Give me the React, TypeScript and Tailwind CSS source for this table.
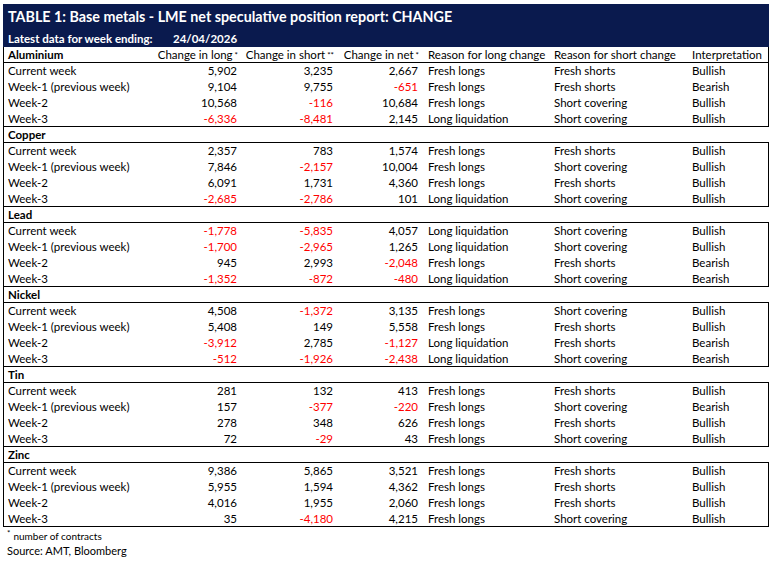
import React from "react";

type Row = {
  label: string;
  long: string;
  short: string;
  net: string;
  reasonLong: string;
  reasonShort: string;
  view: string;
};

type Section = { metal: string; rows: Row[] };

const labels = ["Current week", "Week-1 (previous week)", "Week-2", "Week-3"];

const mk = (metal: string, data: string[][]): Section => ({
  metal,
  rows: data.map((d, i) => ({
    label: labels[i],
    long: d[0],
    short: d[1],
    net: d[2],
    reasonLong: d[3],
    reasonShort: d[4],
    view: d[5],
  })),
});

const sections: Section[] = [
  mk("Aluminium", [
    ["5,902", "3,235", "2,667", "Fresh longs", "Fresh shorts", "Bullish"],
    ["9,104", "9,755", "-651", "Fresh longs", "Fresh shorts", "Bearish"],
    ["10,568", "-116", "10,684", "Fresh longs", "Short covering", "Bullish"],
    ["-6,336", "-8,481", "2,145", "Long liquidation", "Short covering", "Bullish"],
  ]),
  mk("Copper", [
    ["2,357", "783", "1,574", "Fresh longs", "Fresh shorts", "Bullish"],
    ["7,846", "-2,157", "10,004", "Fresh longs", "Short covering", "Bullish"],
    ["6,091", "1,731", "4,360", "Fresh longs", "Fresh shorts", "Bullish"],
    ["-2,685", "-2,786", "101", "Long liquidation", "Short covering", "Bullish"],
  ]),
  mk("Lead", [
    ["-1,778", "-5,835", "4,057", "Long liquidation", "Short covering", "Bullish"],
    ["-1,700", "-2,965", "1,265", "Long liquidation", "Short covering", "Bullish"],
    ["945", "2,993", "-2,048", "Fresh longs", "Fresh shorts", "Bearish"],
    ["-1,352", "-872", "-480", "Long liquidation", "Short covering", "Bearish"],
  ]),
  mk("Nickel", [
    ["4,508", "-1,372", "3,135", "Fresh longs", "Short covering", "Bullish"],
    ["5,408", "149", "5,558", "Fresh longs", "Fresh shorts", "Bullish"],
    ["-3,912", "2,785", "-1,127", "Long liquidation", "Fresh shorts", "Bearish"],
    ["-512", "-1,926", "-2,438", "Long liquidation", "Short covering", "Bearish"],
  ]),
  mk("Tin", [
    ["281", "132", "413", "Fresh longs", "Fresh shorts", "Bullish"],
    ["157", "-377", "-220", "Fresh longs", "Short covering", "Bearish"],
    ["278", "348", "626", "Fresh longs", "Fresh shorts", "Bullish"],
    ["72", "-29", "43", "Fresh longs", "Short covering", "Bullish"],
  ]),
  mk("Zinc", [
    ["9,386", "5,865", "3,521", "Fresh longs", "Fresh shorts", "Bullish"],
    ["5,955", "1,594", "4,362", "Fresh longs", "Fresh shorts", "Bullish"],
    ["4,016", "1,955", "2,060", "Fresh longs", "Fresh shorts", "Bullish"],
    ["35", "-4,180", "4,215", "Fresh longs", "Short covering", "Bullish"],
  ]),
];

const cols = "grid grid-cols-[152px_85px_96px_85px_126px_139px_83px]";

const Num = ({ v }: { v: string }) => (
  <div className={`text-right pr-[4px] ${v.startsWith("-") ? "text-[#ff0000]" : ""}`}>{v}</div>
);

const Star = ({ n }: { n: number }) => (
  <sup className="text-[8px] relative -top-[1px] ml-[2px]">{"*".repeat(n)}</sup>
);

const App = () => {
  return (
    <div
      className="w-[771px] h-[561px] bg-white text-black pl-[3px] pt-[4px] text-[11.5px] leading-none"
      style={{ fontFamily: "Lato, 'Noto Sans', sans-serif" }}
    >
      <div className="w-[766px]">
        {/* title block */}
        <div className="bg-[#0a1a4e] text-white font-bold">
          <div className="h-[27px] flex items-center pl-[5px] text-[14.3px]">
            TABLE 1: Base metals - LME net speculative position report: CHANGE
          </div>
          <div className="h-[16px] flex items-center pl-[5px] text-[11.5px]">
            <span className="w-[165px] shrink-0">Latest data for week ending:</span>
            <span>24/04/2026</span>
          </div>
        </div>

        {sections.map((s, si) => (
          <div key={s.metal}>
            {/* metal header row */}
            <div
              className={`${cols} h-4 items-center border-l border-b border-black ${
                si === 0 ? "border-r" : ""
              }`}
            >
              <div className="pl-[4px] font-bold">{s.metal}</div>
              {si === 0 && (
                <>
                  <div className="text-right pr-[3px]">
                    Change in long<Star n={1} />
                  </div>
                  <div className="text-right pr-[3px]">
                    Change in short<Star n={2} />
                  </div>
                  <div className="text-right pr-[3px]">
                    Change in net<Star n={1} />
                  </div>
                  <div className="pl-[6px]">Reason for long change</div>
                  <div className="pl-[6px]">Reason for short change</div>
                  <div className="pl-[5px]">Interpretation</div>
                </>
              )}
            </div>
            {/* data rows */}
            <div className="border-x border-b border-black">
              {s.rows.map((r, ri) => (
                <div
                  key={r.label}
                  className={`${cols} items-center ${ri === 3 ? "h-[15px]" : "h-4"}`}
                >
                  <div className="pl-[4px]">{r.label}</div>
                  <Num v={r.long} />
                  <Num v={r.short} />
                  <Num v={r.net} />
                  <div className="pl-[6px]">{r.reasonLong}</div>
                  <div className="pl-[6px]">{r.reasonShort}</div>
                  <div className="pl-[5px]">{r.view}</div>
                </div>
              ))}
            </div>
          </div>
        ))}

        {/* footnotes */}
        <div className="pl-[4px] pt-[3px] text-[10px] h-[14px] flex items-center">
          <span className="text-[8px] relative -top-[3px] mr-[3px]">*</span>
          number of contracts
        </div>
        <div className="pl-[4px] pt-[2px] text-[11px] h-[16px] flex items-center">
          Source: AMT, Bloomberg
        </div>
      </div>
    </div>
  );
};

export default App;
